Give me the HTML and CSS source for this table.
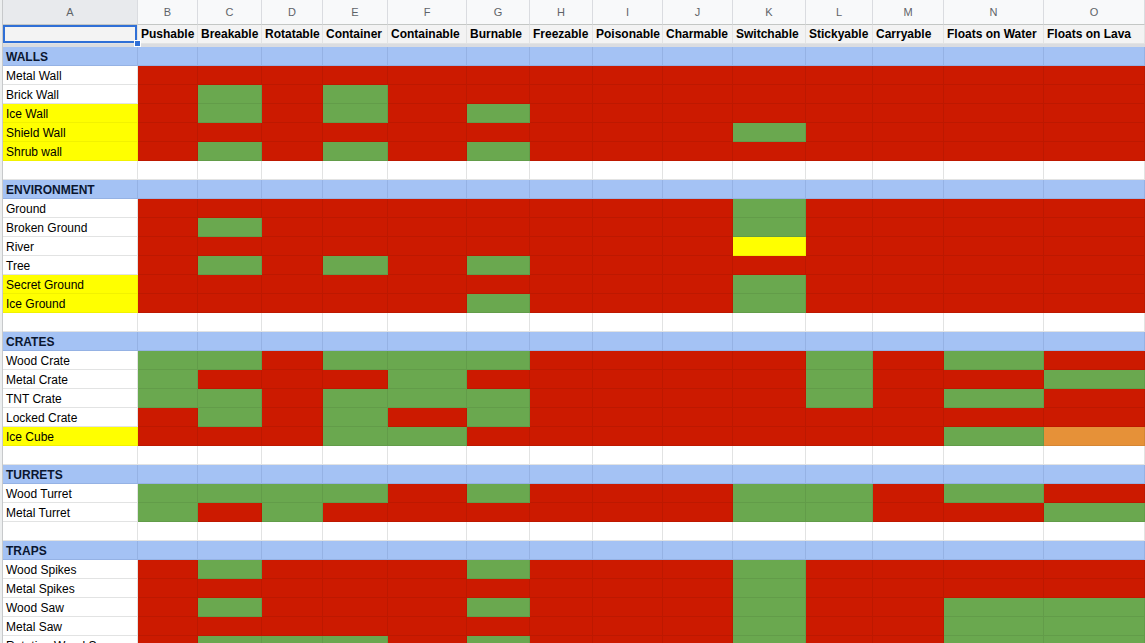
FILE: index.html
```html
<!DOCTYPE html>
<html>
<head>
<meta charset="utf-8">
<title>Object properties</title>
<link rel="stylesheet" href="styles.css">
</head>
<body>
<div class="sheet">
  <div class="strip"></div>
  <div class="grid">
    <div class="row letters">
      <div class="c sel">A</div><div class="c">B</div><div class="c">C</div><div class="c">D</div><div class="c">E</div><div class="c">F</div><div class="c">G</div><div class="c">H</div><div class="c">I</div><div class="c">J</div><div class="c">K</div><div class="c">L</div><div class="c">M</div><div class="c">N</div><div class="c">O</div>
    </div>
    <div class="row names">
      <div class="c a1"></div><div class="c">Pushable</div><div class="c">Breakable</div><div class="c">Rotatable</div><div class="c">Container</div><div class="c">Containable</div><div class="c">Burnable</div><div class="c">Freezable</div><div class="c">Poisonable</div><div class="c">Charmable</div><div class="c">Switchable</div><div class="c">Stickyable</div><div class="c">Carryable</div><div class="c">Floats on Water</div><div class="c">Floats on Lava</div>
    </div>
    <div class="freeze"></div>

    <div class="row sec"><div class="c">WALLS</div><div class="c"></div><div class="c"></div><div class="c"></div><div class="c"></div><div class="c"></div><div class="c"></div><div class="c"></div><div class="c"></div><div class="c"></div><div class="c"></div><div class="c"></div><div class="c"></div><div class="c"></div><div class="c"></div></div>
    <div class="row"><div class="c">Metal Wall</div><div class="c r"></div><div class="c r"></div><div class="c r"></div><div class="c r"></div><div class="c r"></div><div class="c r"></div><div class="c r"></div><div class="c r"></div><div class="c r"></div><div class="c r"></div><div class="c r"></div><div class="c r"></div><div class="c r"></div><div class="c r"></div></div>
    <div class="row"><div class="c">Brick Wall</div><div class="c r"></div><div class="c g"></div><div class="c r"></div><div class="c g"></div><div class="c r"></div><div class="c r"></div><div class="c r"></div><div class="c r"></div><div class="c r"></div><div class="c r"></div><div class="c r"></div><div class="c r"></div><div class="c r"></div><div class="c r"></div></div>
    <div class="row"><div class="c y">Ice Wall</div><div class="c r"></div><div class="c g"></div><div class="c r"></div><div class="c g"></div><div class="c r"></div><div class="c g"></div><div class="c r"></div><div class="c r"></div><div class="c r"></div><div class="c r"></div><div class="c r"></div><div class="c r"></div><div class="c r"></div><div class="c r"></div></div>
    <div class="row"><div class="c y">Shield Wall</div><div class="c r"></div><div class="c r"></div><div class="c r"></div><div class="c r"></div><div class="c r"></div><div class="c r"></div><div class="c r"></div><div class="c r"></div><div class="c r"></div><div class="c g"></div><div class="c r"></div><div class="c r"></div><div class="c r"></div><div class="c r"></div></div>
    <div class="row"><div class="c y">Shrub wall</div><div class="c r"></div><div class="c g"></div><div class="c r"></div><div class="c g"></div><div class="c r"></div><div class="c g"></div><div class="c r"></div><div class="c r"></div><div class="c r"></div><div class="c r"></div><div class="c r"></div><div class="c r"></div><div class="c r"></div><div class="c r"></div></div>
    <div class="row"><div class="c"></div><div class="c"></div><div class="c"></div><div class="c"></div><div class="c"></div><div class="c"></div><div class="c"></div><div class="c"></div><div class="c"></div><div class="c"></div><div class="c"></div><div class="c"></div><div class="c"></div><div class="c"></div><div class="c"></div></div>

    <div class="row sec"><div class="c">ENVIRONMENT</div><div class="c"></div><div class="c"></div><div class="c"></div><div class="c"></div><div class="c"></div><div class="c"></div><div class="c"></div><div class="c"></div><div class="c"></div><div class="c"></div><div class="c"></div><div class="c"></div><div class="c"></div><div class="c"></div></div>
    <div class="row"><div class="c">Ground</div><div class="c r"></div><div class="c r"></div><div class="c r"></div><div class="c r"></div><div class="c r"></div><div class="c r"></div><div class="c r"></div><div class="c r"></div><div class="c r"></div><div class="c g"></div><div class="c r"></div><div class="c r"></div><div class="c r"></div><div class="c r"></div></div>
    <div class="row"><div class="c">Broken Ground</div><div class="c r"></div><div class="c g"></div><div class="c r"></div><div class="c r"></div><div class="c r"></div><div class="c r"></div><div class="c r"></div><div class="c r"></div><div class="c r"></div><div class="c g"></div><div class="c r"></div><div class="c r"></div><div class="c r"></div><div class="c r"></div></div>
    <div class="row"><div class="c">River</div><div class="c r"></div><div class="c r"></div><div class="c r"></div><div class="c r"></div><div class="c r"></div><div class="c r"></div><div class="c r"></div><div class="c r"></div><div class="c r"></div><div class="c y"></div><div class="c r"></div><div class="c r"></div><div class="c r"></div><div class="c r"></div></div>
    <div class="row"><div class="c">Tree</div><div class="c r"></div><div class="c g"></div><div class="c r"></div><div class="c g"></div><div class="c r"></div><div class="c g"></div><div class="c r"></div><div class="c r"></div><div class="c r"></div><div class="c r"></div><div class="c r"></div><div class="c r"></div><div class="c r"></div><div class="c r"></div></div>
    <div class="row"><div class="c y">Secret Ground</div><div class="c r"></div><div class="c r"></div><div class="c r"></div><div class="c r"></div><div class="c r"></div><div class="c r"></div><div class="c r"></div><div class="c r"></div><div class="c r"></div><div class="c g"></div><div class="c r"></div><div class="c r"></div><div class="c r"></div><div class="c r"></div></div>
    <div class="row"><div class="c y">Ice Ground</div><div class="c r"></div><div class="c r"></div><div class="c r"></div><div class="c r"></div><div class="c r"></div><div class="c g"></div><div class="c r"></div><div class="c r"></div><div class="c r"></div><div class="c g"></div><div class="c r"></div><div class="c r"></div><div class="c r"></div><div class="c r"></div></div>
    <div class="row"><div class="c"></div><div class="c"></div><div class="c"></div><div class="c"></div><div class="c"></div><div class="c"></div><div class="c"></div><div class="c"></div><div class="c"></div><div class="c"></div><div class="c"></div><div class="c"></div><div class="c"></div><div class="c"></div><div class="c"></div></div>

    <div class="row sec"><div class="c">CRATES</div><div class="c"></div><div class="c"></div><div class="c"></div><div class="c"></div><div class="c"></div><div class="c"></div><div class="c"></div><div class="c"></div><div class="c"></div><div class="c"></div><div class="c"></div><div class="c"></div><div class="c"></div><div class="c"></div></div>
    <div class="row"><div class="c">Wood Crate</div><div class="c g"></div><div class="c g"></div><div class="c r"></div><div class="c g"></div><div class="c g"></div><div class="c g"></div><div class="c r"></div><div class="c r"></div><div class="c r"></div><div class="c r"></div><div class="c g"></div><div class="c r"></div><div class="c g"></div><div class="c r"></div></div>
    <div class="row"><div class="c">Metal Crate</div><div class="c g"></div><div class="c r"></div><div class="c r"></div><div class="c r"></div><div class="c g"></div><div class="c r"></div><div class="c r"></div><div class="c r"></div><div class="c r"></div><div class="c r"></div><div class="c g"></div><div class="c r"></div><div class="c r"></div><div class="c g"></div></div>
    <div class="row"><div class="c">TNT Crate</div><div class="c g"></div><div class="c g"></div><div class="c r"></div><div class="c g"></div><div class="c g"></div><div class="c g"></div><div class="c r"></div><div class="c r"></div><div class="c r"></div><div class="c r"></div><div class="c g"></div><div class="c r"></div><div class="c g"></div><div class="c r"></div></div>
    <div class="row"><div class="c">Locked Crate</div><div class="c r"></div><div class="c g"></div><div class="c r"></div><div class="c g"></div><div class="c r"></div><div class="c g"></div><div class="c r"></div><div class="c r"></div><div class="c r"></div><div class="c r"></div><div class="c r"></div><div class="c r"></div><div class="c r"></div><div class="c r"></div></div>
    <div class="row"><div class="c y">Ice Cube</div><div class="c r"></div><div class="c r"></div><div class="c r"></div><div class="c g"></div><div class="c g"></div><div class="c r"></div><div class="c r"></div><div class="c r"></div><div class="c r"></div><div class="c r"></div><div class="c r"></div><div class="c r"></div><div class="c g"></div><div class="c o"></div></div>
    <div class="row"><div class="c"></div><div class="c"></div><div class="c"></div><div class="c"></div><div class="c"></div><div class="c"></div><div class="c"></div><div class="c"></div><div class="c"></div><div class="c"></div><div class="c"></div><div class="c"></div><div class="c"></div><div class="c"></div><div class="c"></div></div>

    <div class="row sec"><div class="c">TURRETS</div><div class="c"></div><div class="c"></div><div class="c"></div><div class="c"></div><div class="c"></div><div class="c"></div><div class="c"></div><div class="c"></div><div class="c"></div><div class="c"></div><div class="c"></div><div class="c"></div><div class="c"></div><div class="c"></div></div>
    <div class="row"><div class="c">Wood Turret</div><div class="c g"></div><div class="c g"></div><div class="c g"></div><div class="c g"></div><div class="c r"></div><div class="c g"></div><div class="c r"></div><div class="c r"></div><div class="c r"></div><div class="c g"></div><div class="c g"></div><div class="c r"></div><div class="c g"></div><div class="c r"></div></div>
    <div class="row"><div class="c">Metal Turret</div><div class="c g"></div><div class="c r"></div><div class="c g"></div><div class="c r"></div><div class="c r"></div><div class="c r"></div><div class="c r"></div><div class="c r"></div><div class="c r"></div><div class="c g"></div><div class="c g"></div><div class="c r"></div><div class="c r"></div><div class="c g"></div></div>
    <div class="row"><div class="c"></div><div class="c"></div><div class="c"></div><div class="c"></div><div class="c"></div><div class="c"></div><div class="c"></div><div class="c"></div><div class="c"></div><div class="c"></div><div class="c"></div><div class="c"></div><div class="c"></div><div class="c"></div><div class="c"></div></div>

    <div class="row sec"><div class="c">TRAPS</div><div class="c"></div><div class="c"></div><div class="c"></div><div class="c"></div><div class="c"></div><div class="c"></div><div class="c"></div><div class="c"></div><div class="c"></div><div class="c"></div><div class="c"></div><div class="c"></div><div class="c"></div><div class="c"></div></div>
    <div class="row"><div class="c">Wood Spikes</div><div class="c r"></div><div class="c g"></div><div class="c r"></div><div class="c r"></div><div class="c r"></div><div class="c g"></div><div class="c r"></div><div class="c r"></div><div class="c r"></div><div class="c g"></div><div class="c r"></div><div class="c r"></div><div class="c r"></div><div class="c r"></div></div>
    <div class="row"><div class="c">Metal Spikes</div><div class="c r"></div><div class="c r"></div><div class="c r"></div><div class="c r"></div><div class="c r"></div><div class="c r"></div><div class="c r"></div><div class="c r"></div><div class="c r"></div><div class="c g"></div><div class="c r"></div><div class="c r"></div><div class="c r"></div><div class="c r"></div></div>
    <div class="row"><div class="c">Wood Saw</div><div class="c r"></div><div class="c g"></div><div class="c r"></div><div class="c r"></div><div class="c r"></div><div class="c g"></div><div class="c r"></div><div class="c r"></div><div class="c r"></div><div class="c g"></div><div class="c r"></div><div class="c r"></div><div class="c g"></div><div class="c g"></div></div>
    <div class="row"><div class="c">Metal Saw</div><div class="c r"></div><div class="c r"></div><div class="c r"></div><div class="c r"></div><div class="c r"></div><div class="c r"></div><div class="c r"></div><div class="c r"></div><div class="c r"></div><div class="c g"></div><div class="c r"></div><div class="c r"></div><div class="c g"></div><div class="c g"></div></div>
    <div class="row"><div class="c">Rotating Wood Saw</div><div class="c r"></div><div class="c g"></div><div class="c g"></div><div class="c g"></div><div class="c r"></div><div class="c g"></div><div class="c r"></div><div class="c r"></div><div class="c r"></div><div class="c g"></div><div class="c r"></div><div class="c r"></div><div class="c g"></div><div class="c g"></div></div>
  </div>
</div>
</body>
</html>
```
FILE: styles.css
```css
html, body {
  margin: 0;
  padding: 0;
  background: #ffffff;
  overflow: hidden;
}

.sheet {
  display: flex;
  width: 1145px;
  height: 643px;
  overflow: hidden;
  font-family: "Liberation Sans", Arial, sans-serif;
  color: #000;
}

.strip {
  flex: 0 0 3px;
  background: linear-gradient(to right, #eceeef 2px, #c7c9cb 2px);
}

.grid {
  flex: 0 0 1142px;
  display: flex;
  flex-direction: column;
}

.row {
  display: grid;
  grid-template-columns: 135px 60px 64px 61px 65px 79px 63px 63px 70px 70px 73px 67px 71px 100px 101px;
  height: 19px;
  flex: 0 0 19px;
}

.c {
  box-sizing: border-box;
  border-right: 1px solid #e2e3e3;
  border-bottom: 1px solid #e2e3e3;
  font-size: 12px;
  line-height: 15px;
  padding: 3px 0 0 3px;
  white-space: nowrap;
  overflow: hidden;
}

/* column letters */
.letters {
  height: 25px;
  flex-basis: 25px;
}
.letters .c {
  background: #f8f9fa;
  border-right-color: #dadce0;
  border-bottom-color: #c4c7c5;
  color: #5f6368;
  font-size: 11px;
  line-height: 24px;
  padding: 0;
  text-align: center;
}
.letters .c.sel {
  background: #e8eaed;
}

/* header names */
.names .c {
  background: #f3f3f3;
  font-weight: bold;
  padding-top: 2px;
}
.names .c.a1 {
  position: relative;
  overflow: visible;
  box-shadow: inset 0 0 0 2px #2f6fd6;
  z-index: 2;
}
.names .c.a1::after {
  content: "";
  position: absolute;
  right: -4px;
  bottom: -4px;
  width: 5px;
  height: 5px;
  background: #2f6fd6;
  border: 1px solid #ffffff;
}

.freeze {
  height: 3px;
  flex: 0 0 3px;
  background: #dadce0;
}

/* section rows */
.sec .c {
  background: #a4c2f4;
  border-color: rgba(20, 40, 90, 0.1);
  font-weight: bold;
  color: #0a1630;
}

/* cell fills */
.r {
  background: #cc1a00;
  border-color: rgba(0, 0, 0, 0.07) !important;
}
.g {
  background: #6aa84f;
  border-color: rgba(0, 0, 0, 0.07) !important;
}
.y {
  background: #ffff00;
  border-color: rgba(0, 0, 0, 0.05) !important;
}
.o {
  background: #e69138;
  border-color: rgba(0, 0, 0, 0.07) !important;
}
```
